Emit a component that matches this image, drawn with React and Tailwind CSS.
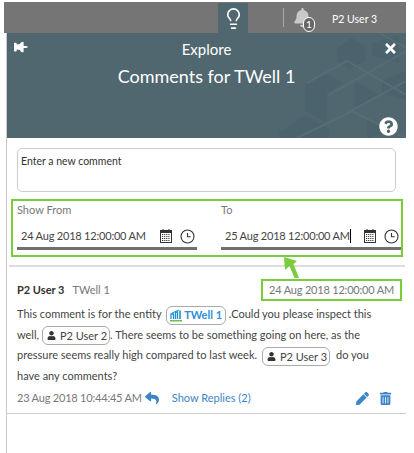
import { FaBell, FaPen, FaQuestionCircle, FaReply, FaThumbtack, FaTimes, FaTrashAlt, FaUser } from 'react-icons/fa';
import { Lightbulb } from 'lucide-react';

function CalendarIcon() {
  return (
    <svg width="12" height="14" viewBox="0 0 12 14" className="text-[#333]">
      <rect x="0.5" y="1.5" width="11" height="12" fill="none" stroke="currentColor" />
      <rect x="0.5" y="1.5" width="11" height="2.5" fill="currentColor" />
      <rect x="2.5" y="0" width="1" height="2" fill="currentColor" />
      <rect x="8.5" y="0" width="1" height="2" fill="currentColor" />
      <path d="M2 5.5h8M2 7.5h8M2 9.5h8M2 11.5h8" stroke="currentColor" strokeDasharray="1.2 0.9" fill="none" />
    </svg>
  );
}

function ClockIcon() {
  return (
    <svg width="15" height="15" viewBox="0 0 15 15" className="text-[#333]">
      <circle cx="7.5" cy="7.5" r="6.5" fill="none" stroke="currentColor" strokeWidth="1.1" />
      <path d="M7.5 4v3.8h3.2" fill="none" stroke="currentColor" strokeWidth="1.1" />
    </svg>
  );
}

function WellIcon() {
  return (
    <svg width="12" height="13" viewBox="0 0 12 13" className="mr-[2px]">
      <path d="M1 10V5h2.5v5M5.5 10V3h2v7" fill="none" stroke="#1f8fd6" strokeWidth="1.3" />
      <path d="M10 10V1.5" stroke="#1f8fd6" strokeWidth="1.6" />
      <path d="M2 4 9 1" stroke="#1f8fd6" strokeWidth="1" />
      <rect x="0" y="11" width="12" height="1.5" fill="#6cc24a" />
    </svg>
  );
}

function UserChip({ name, className = '' }) {
  return (
    <span className={`inline-flex items-center gap-[4px] h-[19px] pl-[4px] pr-[2px] border border-[#aaa] rounded-[6px] align-middle ${className}`}>
      <FaUser className="text-[9px] text-[#333]" />
      {name}
    </span>
  );
}

function DateField({ label, value, caret, className }) {
  return (
    <div className={className}>
      <div className="h-[18px] leading-[18px] text-[#777]">{label}</div>
      <div className="flex items-center h-[28px] pt-[6px] pl-[4px] pr-[2px]">
        <span className="text-[#444] whitespace-nowrap tracking-[-0.2px]">{value}</span>
        {caret && <span className="w-px h-[14px] bg-black" />}
        <div className="ml-auto flex items-center gap-[8px]">
          <CalendarIcon />
          <ClockIcon />
        </div>
      </div>
      <div className="h-[3px] bg-[#707070]" />
    </div>
  );
}

function HeaderPattern() {
  return (
    <svg className="absolute inset-0 w-full h-full" viewBox="0 0 399 105" fill="none">
      <g fill="#4b636c">
        <path d="M330 15 345 5 358 14V28L343 36 330 28Z" />
        <path d="M300 50 318 40 336 50 318 62Z" />
        <path d="M365 10 392 2V30L365 22Z" />
        <path d="M298 50 320 62V90L298 78Z" />
        <path d="M348 48 372 62 348 76Z" />
        <path d="M375 48 399 38V66L375 60Z" />
        <path d="M272 100 298 82 322 96 322 105H272Z" />
        <path d="M360 85 385 98 360 105Z" />
      </g>
      <g stroke="#566d76" strokeWidth="2">
        <path d="M300 50 340 28 399 62M322 62 399 18M340 80 399 48M290 105 345 78 399 105M372 0 399 15" />
      </g>
    </svg>
  );
}

export default function App() {
  return (
    <div className="w-[414px] h-[453px] overflow-hidden bg-white pt-[2px] text-[11px] text-[#444] font-['Lato','Open_Sans',sans-serif]">
      {/* top bar */}
      <div className="ml-[4px] w-[402px] h-[31px] bg-[#757575] flex items-stretch text-white">
        <div className="ml-[214px] mt-px w-[30px] bg-[#50676f] flex items-center justify-center">
          <Lightbulb size={23} strokeWidth={1.7} />
        </div>
        <div className="ml-[35px] my-[6px] w-px bg-[#a8a8a8]" />
        <div className="relative ml-[9px] w-[22px] flex items-center">
          <FaBell className="text-[19px] text-[#c9c9c9]" />
          <span className="absolute left-[10px] top-[15px] w-[12px] h-[15px] rounded-full border border-white bg-[#666] text-[10px] leading-[13px] text-center">1</span>
        </div>
        <div className="ml-[17px] text-[10.5px] leading-[34px]">P2 User 3</div>
      </div>

      <div className="ml-[6px] w-[400px] h-[420px] border-l border-[#c8c8c8]">
        {/* header */}
        <div className="relative h-[105px] bg-[#50676f] text-white text-center overflow-hidden">
          <HeaderPattern />
          <FaThumbtack className="absolute left-[7px] top-[7px] text-[14px] -rotate-90" />
          <FaTimes className="absolute right-[8px] top-[8px] text-[15px]" />
          <FaQuestionCircle className="absolute right-[8px] bottom-[2px] text-[19px]" />
          <div className="relative pt-[4px] text-[15px] leading-[24px]">Explore</div>
          <div className="relative mt-px text-[18px] leading-[28px]">Comments for TWell 1</div>
        </div>

        {/* new comment */}
        <div className="mt-[10px] ml-[10px] w-[379px] h-[44px] border border-[#ccc] rounded-[5px] pl-[3px] pt-[4px] text-[10.5px] leading-[16px] text-[#333]">
          Enter a new comment
        </div>

        {/* date range */}
        <div className="mt-[7px] ml-[4px] w-[392px] h-[58px] border-[2px] border-[#7bcc3c] flex pl-[4px]">
          <DateField label="Show From" value="24 Aug 2018 12:00:00 AM" className="w-[180px]" />
          <DateField label="To" value="25 Aug 2018 12:00:00 AM" caret className="ml-[24px] w-[180px]" />
        </div>
        <div className="mt-[8px] ml-[2px] mr-[1px] h-[2px] bg-[#ddd]" />

        {/* comment */}
        <div className="relative pl-[10px] pr-[4px] pt-[12px] h-[147px] border-b border-[#ccc]">
          <svg className="absolute left-[277px] top-[-11px]" width="16" height="23" viewBox="0 0 16 23">
            <path d="M0 1 13 5 9.5 8 15 22 10.5 22 5.5 10 1 14Z" fill="#7bcc3c" />
          </svg>
          <div className="flex items-center justify-between h-[22px]">
            <div>
              <span className="font-bold text-[#333]">P2 User 3</span>
              <span className="ml-[8px] text-[#777]">TWell 1</span>
            </div>
            <div className="w-[141px] h-[22px] border-[2px] border-[#7bcc3c] text-center leading-[18px] text-[#777] whitespace-nowrap tracking-[-0.2px]">
              24 Aug 2018 12:00:00 AM
            </div>
          </div>
          <div className="mt-[3px] leading-[20px] w-[385px] whitespace-nowrap">
            <div>
              This comment is for the entity{' '}
              <span className="inline-flex items-center h-[19px] ml-[2px] px-[3px] border border-[#aaa] rounded-[6px] align-middle text-[#2f8fd8] font-bold">
                <WellIcon />TWell 1
              </span>{' '}
              .Could you please inspect this
            </div>
            <div>
              well, <UserChip name="P2 User 2" />. There seems to be something going on here, as the
            </div>
            <div>
              pressure seems really high compared to last week. <UserChip name="P2 User 3" className="ml-[2px]" /><span className="ml-[6px]">do you</span>
            </div>
            <div>have any comments?</div>
          </div>
          <div className="mt-[2px] flex items-center h-[20px]">
            <span className="text-[#777] tracking-[-0.2px]">23 Aug 2018 10:44:45 AM</span>
            <FaReply className="ml-[3px] text-[14px] text-[#3d85c6]" />
            <span className="ml-[13px] text-[#3d85c6]">Show Replies (2)</span>
            <FaPen className="ml-auto text-[13px] text-[#3d85c6]" />
            <FaTrashAlt className="ml-[10px] mr-[10px] text-[13px] text-[#3d85c6]" />
          </div>
        </div>
      </div>
    </div>
  );
}
